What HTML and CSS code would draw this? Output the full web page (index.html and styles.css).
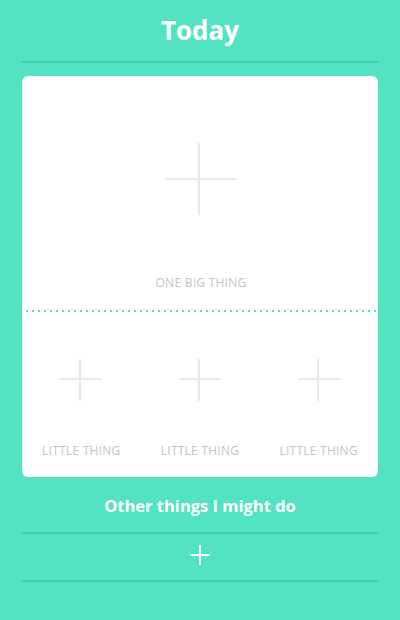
FILE: index.html
```html
<!DOCTYPE html>
<html lang="en">
<head>
    <meta charset="UTF-8">
    <meta name="viewport" content="width=device-width, initial-scale=1.0">
    <title>Today</title>
    <link rel="stylesheet" href="styles.css">
</head>
<body>

    <header class="top">
        <h1 class="title">Today</h1>
    </header>
    <div class="rule"></div>

    <main class="card">
        <section class="big">
            <svg class="plus plus-big" width="72" height="72" viewBox="0 0 72 72">
                <path d="M0 36 H72 M34 0 V72" />
            </svg>
            <span class="label">One big thing</span>
        </section>

        <div class="dots"></div>

        <section class="little">
            <div class="slot">
                <svg class="plus" width="42" height="42" viewBox="0 0 42 42">
                    <path d="M0 20 H42 M20 0 V42" />
                </svg>
                <span class="label">Little thing</span>
            </div>
            <div class="slot">
                <svg class="plus" width="42" height="42" viewBox="0 0 42 42">
                    <path d="M0 20 H42 M20 0 V42" />
                </svg>
                <span class="label">Little thing</span>
            </div>
            <div class="slot">
                <svg class="plus" width="42" height="42" viewBox="0 0 42 42">
                    <path d="M0 20 H42 M20 0 V42" />
                </svg>
                <span class="label">Little thing</span>
            </div>
        </section>
    </main>

    <h2 class="sub">Other things I might do</h2>
    <div class="rule"></div>
    <div class="add-row">
        <svg class="plus-white" width="20" height="20" viewBox="0 0 20 20">
            <path d="M0 10 H20 M10 0 V20" />
        </svg>
    </div>
    <div class="rule"></div>

</body>
</html>
```

FILE: styles.css
```css
body {
    font-family: "Open Sans", Arial, sans-serif;
    background-color: #53e3c2;
    margin: 0;
    padding: 0 22px;
}
.top {
    height: 61px;
    display: flex;
    justify-content: center;
    align-items: center;
}
.title {
    margin: 0;
    color: white;
    font-size: 26px;
    font-weight: 700;
    line-height: 32px;
    margin-top: -2px;
}
.rule {
    height: 2px;
    background: #47c9aa;
    margin: 0 -1px 0 -1px;
}
.card {
    background: white;
    border-radius: 6px;
    margin-top: 13px;
    display: flex;
    flex-direction: column;
}
.big {
    display: flex;
    flex-direction: column;
    align-items: center;
    padding: 67px 0 19px 2px;
    gap: 60px;
}
.plus path {
    stroke: #e8e8e8;
    stroke-width: 2;
    fill: none;
}
.label {
    font-size: 12px;
    line-height: 16px;
    color: #c4c4c4;
    text-transform: uppercase;
    letter-spacing: 0.25px;
}
.dots {
    height: 2px;
    margin: 0 2px 0 4px;
    background: repeating-linear-gradient(to right, #53e3c2 0 2px, transparent 2px 6px);
}
.little {
    display: grid;
    grid-template-columns: 1fr 1fr 1fr;
    padding: 47px 0 18px;
}
.slot {
    display: flex;
    flex-direction: column;
    align-items: center;
    gap: 42px;
}
.sub {
    margin: 17px 0 14px;
    text-align: center;
    color: white;
    font-size: 16.5px;
    font-weight: 700;
    line-height: 24px;
}
.add-row {
    display: flex;
    justify-content: center;
    padding: 11px 0 15px;
}
.plus-white path {
    stroke: white;
    stroke-width: 2;
    fill: none;
}
```
